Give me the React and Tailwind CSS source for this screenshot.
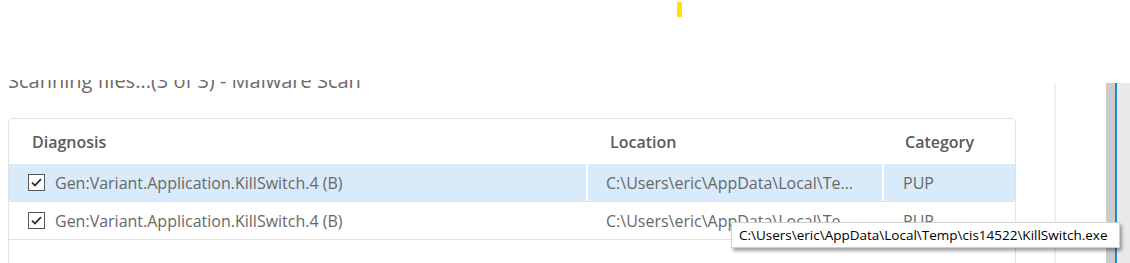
import React from 'react';

const rows = [
  { name: 'Gen:Variant.Application.KillSwitch.4 (B)', location: 'C:\\Users\\eric\\AppData\\Local\\Te...', category: 'PUP', selected: true },
  { name: 'Gen:Variant.Application.KillSwitch.4 (B)', location: 'C:\\Users\\eric\\AppData\\Local\\Te...', category: 'PUP', selected: false },
];

// Checked box, like the Windows one
const CheckBox = () => (
  <div className="w-[17px] h-[17px] border border-[#555] bg-white flex items-center justify-center shrink-0">
    <svg width="11" height="9" viewBox="0 0 11 9">
      <path d="M1 4.6 L4 7.4 L10 1.2" fill="none" stroke="#333" strokeWidth="1.8" />
    </svg>
  </div>
);

export default function App() {
  return (
    <div className="w-[1130px] h-[263px] overflow-hidden bg-white relative" style={{ fontFamily: '"Open Sans", "Liberation Sans", sans-serif' }}>
      {/* small yellow marker at top */}
      <div className="pt-[2px]">
        <div className="ml-[677px] w-[5px] h-[15px] bg-[#ffe400]" />
      </div>

      <div className="flex mt-[61px]">
        {/* main column */}
        <div className="w-[1054px] shrink-0">
          {/* title, scrolled so its top is hidden */}
          <div className="h-[16px] pt-[2px]">
            <div className="h-[14px] overflow-hidden pl-[8px]">
              <div className="text-[20px] leading-[20px] text-[#6a6a6a] whitespace-nowrap -mt-[9px]">
                Scanning files...(3 of 3) - Malware Scan
              </div>
            </div>
          </div>

          {/* results table */}
          <div className="ml-[8px] mt-[24px] w-[1008px] border border-[#e2e2e2] rounded-[5px] h-[200px]">
            <div className="flex h-[45px] items-center text-[16px] font-semibold text-[#5a5a5a]">
              <div className="w-[577px] pl-[23px]">Diagnosis</div>
              <div className="w-[296px] pl-[24px]">Location</div>
              <div className="flex-1 pl-[23px]">Category</div>
            </div>
            {rows.map((r, i) => (
              <div
                key={i}
                className={`flex h-[38px] items-center border-b border-[#e0e0e0] text-[16px] text-[#686868] ${r.selected ? 'bg-[#d9eafa]' : 'bg-white'}`}
              >
                <div className="w-[577px] h-full flex items-center gap-[10px] pl-[19px]">
                  <CheckBox />
                  <span>{r.name}</span>
                </div>
                <div className={`w-[296px] h-full flex items-center pl-[18px] border-l-2 whitespace-nowrap overflow-hidden ${r.selected ? 'border-white' : 'border-transparent'}`}>
                  {r.location}
                </div>
                <div className={`flex-1 h-full flex items-center pl-[19px] border-l-2 ${r.selected ? 'border-white' : 'border-transparent'}`}>
                  {r.category}
                </div>
              </div>
            ))}
          </div>
        </div>

        {/* right side: separator, blank pane, scrollbar edge */}
        <div className="flex flex-1 mt-[5px] h-[200px]">
          <div className="w-[2px] bg-[#efefef]" />
          <div className="w-[50px] bg-white" />
          <div className="w-[9px] bg-[#cbcbcb]" />
          <div className="w-[2px] bg-[#1a86d4]" />
          <div className="flex-1 bg-[#e9e9e9]" />
        </div>
      </div>

      {/* tooltip over the second row */}
      <div className="absolute left-[731px] top-[222px] w-[389px] h-[26px] bg-white border border-[#cfcfcf] shadow-[2px_3px_3px_rgba(0,0,0,0.35)] flex items-center pl-[7px] text-[13.5px] text-black whitespace-nowrap">
        C:\Users\eric\AppData\Local\Temp\cis14522\KillSwitch.exe
      </div>
    </div>
  );
}
